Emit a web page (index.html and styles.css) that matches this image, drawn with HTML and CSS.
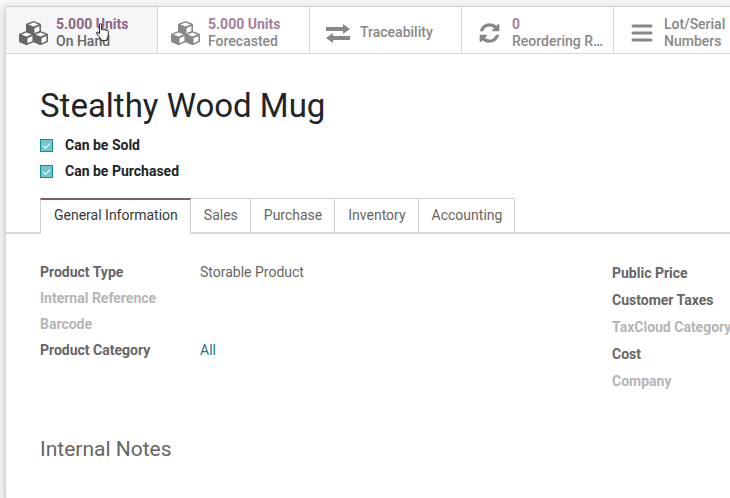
FILE: index.html
```html
<!DOCTYPE html>
<html lang="en">

<head>
  <meta charset="UTF-8">
  <title>Stealthy Wood Mug</title>
  <link rel="stylesheet" href="styles.css">
</head>

<body>

  <!-- cube icon shared by two stat buttons -->
  <svg class="defs" width="0" height="0" aria-hidden="true">
    <symbol id="cube" viewBox="0 0 15 14">
      <path fill="currentColor" d="M7.5 0 L14 2.4 Q15 2.8 15 3.8 V9.9 Q15 10.8 14.2 11.2 L8.2 14 H6.8 L.8 11.2 Q0 10.8 0 9.9 V3.8 Q0 2.8 1 2.4 Z"/>
      <path fill="#fff" d="M7.5 1.5 L12.6 3.5 L7.5 5.6 L2.4 3.5 Z M8.5 7.2 L13.4 5.1 V9.9 L8.5 12.2 Z"/>
    </symbol>
    <symbol id="cubes" viewBox="0 0 29 24">
      <use href="#cube" x="7" y="0" width="15" height="14"/>
      <use href="#cube" x="0" y="10" width="15" height="14"/>
      <use href="#cube" x="14" y="10" width="15" height="14"/>
    </symbol>
  </svg>

  <main class="sheet">
    <div class="button-box">
      <button class="stat-btn active">
        <svg class="icon" width="29" height="24"><use href="#cubes"/></svg>
        <span class="stat-info"><span class="stat-value">5.000 Units</span><span class="stat-text">On Hand</span></span>
        <svg class="pointer" width="13" height="18" viewBox="0 0 13 18">
          <path fill="#fff" stroke="#222" d="M3.5 11 V2 Q3.5 .6 4.5 .6 Q5.6 .6 5.6 2 V7 Q5.6 5.8 6.6 5.8 Q7.8 5.8 7.8 7.2 Q7.8 6.2 8.8 6.2 Q10 6.2 10 7.8 Q10.2 7 11 7 Q12.3 7 12.3 8.5 V12 Q12.3 14 11 15.5 V17.4 H5 V16 L1 11 Q.2 9.6 1 9 Q2 8.5 3.5 11 Z"/>
        </svg>
      </button>
      <button class="stat-btn">
        <svg class="icon" width="29" height="24"><use href="#cubes"/></svg>
        <span class="stat-info"><span class="stat-value">5.000 Units</span><span class="stat-text">Forecasted</span></span>
      </button>
      <button class="stat-btn">
        <svg class="icon" width="29" height="24" viewBox="0 0 29 24">
          <path fill="currentColor" d="M3 6 H20 V3 L27 8 L20 13 V10 H3 Z M27 15 H10 V12 L3 17 L10 22 V19 H27 Z"/>
        </svg>
        <span class="stat-info"><span class="stat-text">Traceability</span></span>
      </button>
      <button class="stat-btn">
        <svg class="icon" width="29" height="24" viewBox="-360 128 2256 1536">
          <path fill="currentColor" d="M1511 1056q0 5-1 7-64 268-268 434.500t-478 166.500q-146 0-282.500-55t-243.500-157l-129 129q-19 19-45 19t-45-19-19-45v-448q0-26 19-45t45-19h448q26 0 45 19t19 45-19 45l-137 137q71 66 161 102t187 36q134 0 250-65t186-179q11-17 53-117 8-23 30-23h192q13 0 22.500 9.500t9.500 22.500zm25-800v448q0 26-19 45t-45 19h-448q-26 0-45-19t-19-45 19-45l138-138q-148-137-349-137-134 0-250 65t-186 179q-11 17-53 117-8 23-30 23h-199q-13 0-22.500-9.500t-9.500-22.500v-7q65-268 270-434.500t480-166.500q146 0 284 55.500t245 156.500l130-129q19-19 45-19t45 19 19 45z"/>
        </svg>
        <span class="stat-info"><span class="stat-value">0</span><span class="stat-text">Reordering Rules</span></span>
      </button>
      <button class="stat-btn">
        <svg class="icon" width="29" height="24" viewBox="0 0 29 24">
          <path stroke="currentColor" stroke-width="3" stroke-linecap="round" d="M6 5 H24 M6 12 H24 M6 19 H24"/>
        </svg>
        <span class="stat-info wrap"><span class="stat-text">Lot/Serial Numbers</span></span>
      </button>
    </div>

    <div class="title">
      <h1>Stealthy Wood Mug</h1>
      <div class="option">
        <input type="checkbox" id="sold" checked>
        <label for="sold">Can be Sold</label>
      </div>
      <div class="option">
        <input type="checkbox" id="purchased" checked>
        <label for="purchased">Can be Purchased</label>
      </div>
    </div>

    <nav class="tabs">
      <a href="#general" class="tab selected">General Information</a>
      <a href="#sales" class="tab">Sales</a>
      <a href="#purchase" class="tab">Purchase</a>
      <a href="#inventory" class="tab">Inventory</a>
      <a href="#accounting" class="tab">Accounting</a>
    </nav>

    <section class="general" id="general">
      <dl class="group">
        <dt>Product Type</dt>
        <dd>Storable Product</dd>
        <dt class="empty">Internal Reference</dt>
        <dd></dd>
        <dt class="empty">Barcode</dt>
        <dd></dd>
        <dt>Product Category</dt>
        <dd><a href="#category">All</a></dd>
      </dl>
      <dl class="group prices">
        <dt>Public Price</dt>
        <dt>Customer Taxes</dt>
        <dt class="empty">TaxCloud Category</dt>
        <dt>Cost</dt>
        <dt class="empty">Company</dt>
      </dl>
    </section>

    <h2>Internal Notes</h2>
  </main>

</body>

</html>
```

FILE: styles.css
```css
* {
  box-sizing: border-box;
}

body {
  margin: 0;
  padding: 6px 0 0 5px;
  background: #f5f5f6;
  color: #666;
  font-family: Roboto, sans-serif;
  font-size: 14px;
  line-height: 18px;
  overflow: hidden;
}

.defs {
  display: block;
}

.sheet {
  min-height: calc(100vh - 6px);
  background: #fff;
  border: 1px solid #ced0d3;
  border-right: 0;
  border-bottom: 0;
  box-shadow: 0 3px 8px rgba(0, 0, 0, 0.2);
}

/* STAT BUTTONS */
.button-box {
  display: flex;
  overflow: hidden;
  border-bottom: 1px solid #d3d8dc;
}

.stat-btn {
  position: relative;
  display: flex;
  flex: 0 0 152px;
  align-items: center;
  gap: 8px;
  min-width: 0;
  height: 46px;
  padding: 5px 8px 0 13px;
  border: 0;
  border-right: 1px solid #d3d8dc;
  background: #fff;
  color: #888;
  font: inherit;
  line-height: 17px;
  text-align: left;
  cursor: pointer;
}

.stat-btn.active {
  background: #f6f6f8;
  color: #666;
}

.icon {
  flex: none;
}

.stat-info {
  min-width: 0;
  font-weight: 500;
}

.stat-value,
.stat-text {
  display: block;
  overflow: hidden;
  text-overflow: ellipsis;
  white-space: nowrap;
}

.stat-value {
  color: #a5809b;
  font-weight: 700;
}

.active .stat-value {
  color: #8c6580;
}

.wrap .stat-text {
  white-space: normal;
}

.pointer {
  position: absolute;
  top: 16px;
  left: 90px;
}

/* TITLE */
.title {
  padding: 29px 34px 0;
  color: #212529;
}

h1 {
  margin: 0 0 3px;
  font-size: 33px;
  font-weight: 400;
  line-height: 46px;
}

.option {
  display: flex;
  align-items: center;
  gap: 12px;
  height: 26px;
  font-weight: 700;
}

.option input {
  appearance: none;
  width: 13px;
  height: 13px;
  margin: 0;
  border: 1px solid #108e9a;
  background: #72c4cd;
}

.option input:checked::after {
  content: "";
  display: block;
  width: 6px;
  height: 3px;
  margin: 3px auto;
  border: solid #fff;
  border-width: 0 0 1px 1px;
  transform: rotate(-45deg);
}

/* TABS */
.tabs {
  display: flex;
  margin-top: 14px;
  padding-left: 34px;
  border-bottom: 2px solid #d6d8dc;
}

.tab {
  padding: 7px 12px 8px 13px;
  border: 1px solid #d0d3d7;
  border-left: 0;
  border-bottom: 0;
  color: #666;
  text-decoration: none;
}

.tab.selected {
  margin-bottom: -2px;
  padding-top: 6px;
  border-top: 2px solid #7c5d72;
  border-left: 1px solid #d0d3d7;
  background: #fff;
  color: #343a40;
}

/* GENERAL INFORMATION */
.general {
  display: grid;
  grid-template-columns: 1fr 118px;
  padding: 25px 0 0 34px;
}

.group {
  display: grid;
  grid-template-columns: 160px 1fr;
  grid-auto-rows: 26px;
  align-content: start;
  align-items: center;
  margin: 0;
}

.prices {
  grid-template-columns: auto;
  grid-auto-rows: 27px;
}

dt {
  font-weight: 700;
  white-space: nowrap;
}

dt.empty {
  color: #b5b5b5;
}

dd {
  margin: 0;
}

dd a {
  color: #19798a;
  text-decoration: none;
}

h2 {
  margin: 42px 34px;
  font-size: 21px;
  font-weight: 400;
  line-height: 26px;
}
```
